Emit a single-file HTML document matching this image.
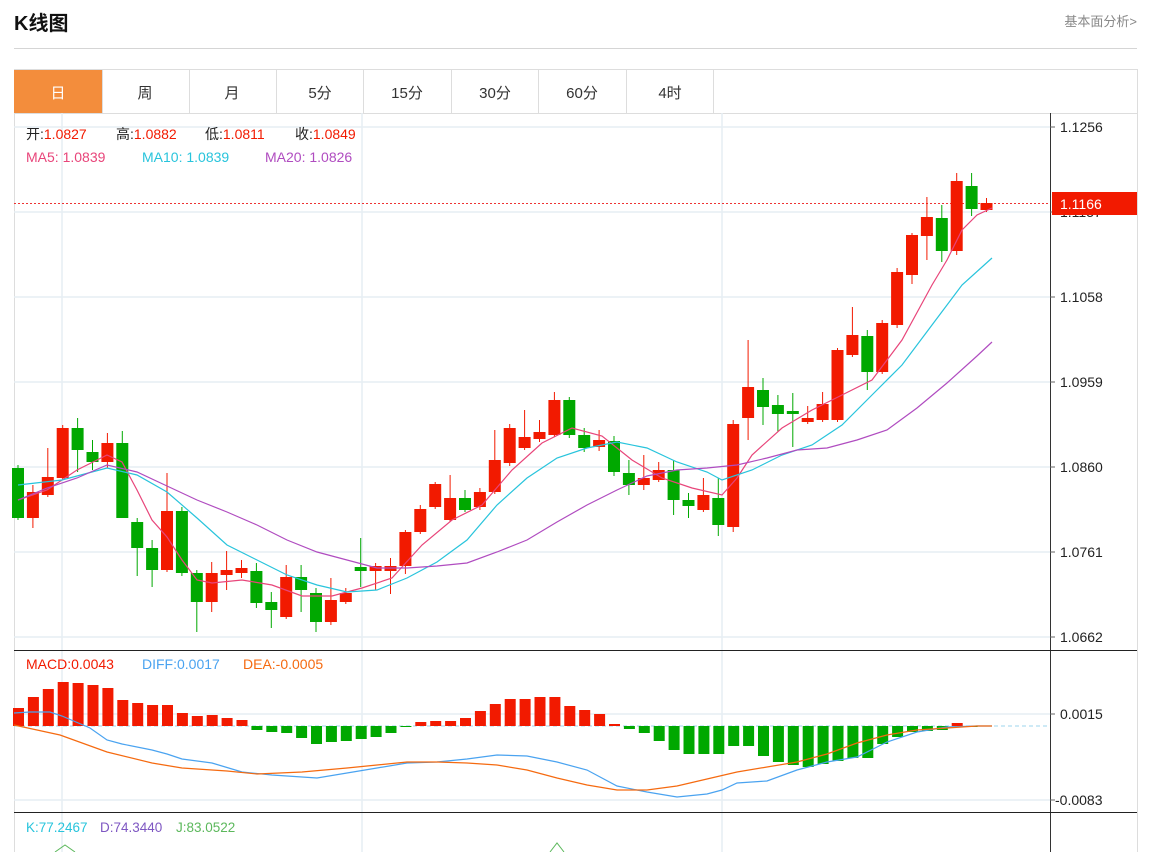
<!DOCTYPE html>
<html><head><meta charset="utf-8"><style>
body{margin:0;background:#fff;width:1152px;height:852px;overflow:hidden;font-family:"Liberation Sans","Noto Sans CJK SC",sans-serif}
</style></head><body>
<svg width="1152" height="852" xmlns="http://www.w3.org/2000/svg" font-family="Liberation Sans, Noto Sans CJK SC, sans-serif">
<text x="14" y="30" font-size="20" font-weight="bold" fill="#111">K线图</text>
<text x="1137" y="26" font-size="13" fill="#888" text-anchor="end">基本面分析&gt;</text>
<line x1="14" y1="48.5" x2="1137" y2="48.5" stroke="#d5d5d5"/>
<rect x="14.5" y="69.5" width="1123" height="800" fill="none" stroke="#ddd"/>
<rect x="14" y="70" width="88" height="43" fill="#f38d3c"/>
<g stroke="#ddd"><line x1="102.5" y1="70" x2="102.5" y2="113"/><line x1="189.5" y1="70" x2="189.5" y2="113"/><line x1="276.5" y1="70" x2="276.5" y2="113"/><line x1="363.5" y1="70" x2="363.5" y2="113"/><line x1="451.5" y1="70" x2="451.5" y2="113"/><line x1="538.5" y1="70" x2="538.5" y2="113"/><line x1="626.5" y1="70" x2="626.5" y2="113"/><line x1="713.5" y1="70" x2="713.5" y2="113"/><line x1="14" y1="113.5" x2="1137" y2="113.5"/></g>
<g font-size="15" text-anchor="middle" fill="#333"><text x="58" y="98" fill="#fff">日</text><text x="145" y="98">周</text><text x="232" y="98">月</text><text x="320" y="98">5分</text><text x="407" y="98">15分</text><text x="495" y="98">30分</text><text x="582" y="98">60分</text><text x="670" y="98">4时</text></g>
<g stroke="#e6eef4" stroke-width="1.5"><line x1="14" y1="127" x2="1050" y2="127"/><line x1="14" y1="212" x2="1050" y2="212"/><line x1="14" y1="297" x2="1050" y2="297"/><line x1="14" y1="382" x2="1050" y2="382"/><line x1="14" y1="467" x2="1050" y2="467"/><line x1="14" y1="552" x2="1050" y2="552"/><line x1="14" y1="637" x2="1050" y2="637"/><line x1="14" y1="714" x2="1050" y2="714"/><line x1="14" y1="800" x2="1050" y2="800"/><line x1="62" y1="113" x2="62" y2="852"/><line x1="362" y1="113" x2="362" y2="852"/><line x1="722" y1="113" x2="722" y2="852"/></g>
<line x1="1050.5" y1="113" x2="1050.5" y2="852" stroke="#333"/>
<line x1="14" y1="650.5" x2="1137" y2="650.5" stroke="#222"/>
<line x1="14" y1="812.5" x2="1137" y2="812.5" stroke="#222"/>
<g font-size="14" fill="#222"><text x="1060" y="132">1.1256</text><text x="1060" y="217">1.1157</text><text x="1060" y="302">1.1058</text><text x="1060" y="387">1.0959</text><text x="1060" y="472">1.0860</text><text x="1060" y="557">1.0761</text><text x="1060" y="642">1.0662</text><text x="1060" y="719">0.0015</text><text x="1055" y="805">-0.0083</text></g>
<g stroke="#666"><line x1="1050" y1="127" x2="1055" y2="127"/><line x1="1050" y1="212" x2="1055" y2="212"/><line x1="1050" y1="297" x2="1055" y2="297"/><line x1="1050" y1="382" x2="1055" y2="382"/><line x1="1050" y1="467" x2="1055" y2="467"/><line x1="1050" y1="552" x2="1055" y2="552"/><line x1="1050" y1="637" x2="1055" y2="637"/><line x1="1050" y1="714" x2="1055" y2="714"/><line x1="1050" y1="800" x2="1055" y2="800"/></g>
<line x1="14" y1="203.5" x2="1050" y2="203.5" stroke="#e33" stroke-dasharray="2,2"/>
<rect x="1052" y="192" width="85" height="23" fill="#f21a00"/>
<text x="1060" y="209" font-size="14" fill="#fff">1.1166</text>
<line x1="14" y1="726" x2="1050" y2="726" stroke="#9dd6ee" stroke-dasharray="4,3"/>
<g id="c"></g><g id="m"></g>
<polyline fill="none" stroke="#e8457a" stroke-width="1.2" points="18,500 47,490 77,470 107,455 122,462 137,490 152,520 167,537 182,560 197,580 212,583 242,580 272,585 302,596 332,596 362,588 392,578 422,545 452,520 482,505 512,470 542,443 572,428 602,436 632,460 662,478 692,488 722,495 737,478 752,455 782,428 812,410 842,395 872,380 902,340 932,285 947,260 962,230 977,215 992,208"/>
<polyline fill="none" stroke="#28c4dc" stroke-width="1.2" points="18,485 62,480 92,472 107,468 137,475 167,492 197,518 227,545 257,560 287,575 317,585 347,592 377,590 407,578 437,562 467,540 497,505 527,478 557,458 587,448 617,442 647,448 677,462 707,472 722,480 752,470 782,455 812,445 842,425 872,395 902,365 932,325 962,285 992,258"/>
<polyline fill="none" stroke="#b04cc0" stroke-width="1.2" points="18,500 47,488 77,478 107,465 137,472 167,486 197,500 227,512 257,525 287,540 317,552 347,560 377,568 407,568 437,566 467,563 497,552 527,540 557,522 587,505 617,490 647,476 677,470 707,468 737,465 767,458 797,450 827,448 857,440 887,430 917,408 947,383 977,356 992,342"/>
<polyline fill="none" stroke="#4aa3f0" stroke-width="1.2" points="14,713 30,712 50,712 62,716 90,728 107,740 122,744 152,750 167,754 182,759 212,763 242,772 272,775 317,778 347,773 377,768 407,763 437,762 467,759 497,755 527,756 557,762 587,770 617,786 647,792 677,797 707,794 722,790 737,783 767,781 797,770 827,762 857,757 887,742 917,732 947,727 977,726 992,726"/>
<polyline fill="none" stroke="#f56a10" stroke-width="1.2" points="14,725 60,735 107,752 152,763 182,768 227,771 257,774 302,772 347,768 377,765 407,762 437,762 467,763 497,765 527,770 557,778 587,785 617,790 647,790 677,786 707,779 737,772 767,767 797,762 827,754 857,743 887,735 917,730 947,728 977,726 992,726"/>
<g font-size="14">
<text x="26" y="139" fill="#222">开:<tspan fill="#f21a00">1.0827</tspan></text>
<text x="116" y="139" fill="#222">高:<tspan fill="#f21a00">1.0882</tspan></text>
<text x="205" y="139" fill="#222">低:<tspan fill="#f21a00">1.0811</tspan></text>
<text x="295" y="139" fill="#222">收:<tspan fill="#f21a00">1.0849</tspan></text>
<text x="26" y="162" fill="#e8457a">MA5: 1.0839</text>
<text x="142" y="162" fill="#28c4dc">MA10: 1.0839</text>
<text x="265" y="162" fill="#b04cc0">MA20: 1.0826</text>
<text x="26" y="669" fill="#f21a00">MACD:0.0043</text>
<text x="142" y="669" fill="#4aa3f0">DIFF:0.0017</text>
<text x="243" y="669" fill="#f56a10">DEA:-0.0005</text>
<text x="26" y="832" fill="#28c4dc" font-size="13.5">K:77.2467</text>
<text x="100" y="832" fill="#7e57c2" font-size="13.5">D:74.3440</text>
<text x="176" y="832" fill="#5cb85c" font-size="13.5">J:83.0522</text></g>
<polyline fill="none" stroke="#5cb85c" points="55,852 65,845 75,852"/>
<polyline fill="none" stroke="#5cb85c" points="550,852 557,843 564,852"/>
</svg>
<script>
var d=[["g",468,518,465,520],["r",492,518,485,528],["r",477,495,448,497],["r",428,478,425,480],["g",428,450,418,472],["g",452,462,440,470],["r",443,462,433,468],["g",443,518,431,518],["g",522,548,518,576],["g",548,570,540,587],["r",511,570,473,572],["g",511,573,507,576],["g",573,602,570,632],["r",573,602,562,612],["r",570,575,551,590],["r",568,573,560,578],["g",571,603,563,608],["g",602,610,592,628],["r",577,617,565,619],["g",577,590,565,612],["g",593,622,588,632],["r",600,622,578,625],["r",593,602,588,604],["g",567,571,538,587],["r",566,571,563,590],["r",566,571,558,594],["r",532,566,530,574],["r",509,532,505,534],["r",484,507,482,509],["r",498,520,475,522],["g",498,510,490,512],["r",492,507,488,510],["r",460,492,430,494],["r",428,463,424,466],["r",437,448,410,450],["r",432,439,420,442],["r",400,435,392,437],["g",400,435,397,438],["g",435,448,428,452],["r",440,447,430,451],["g",441,472,436,476],["g",473,485,460,495],["r",478,485,455,490],["r",470,480,462,482],["g",470,500,460,515],["g",500,506,493,518],["r",495,510,478,512],["g",498,525,478,536],["r",424,527,420,532],["r",387,418,340,440],["g",390,407,378,425],["g",405,414,395,432],["g",411,414,393,447],["r",418,422,406,424],["r",404,420,392,422],["r",350,420,348,422],["r",335,355,307,357],["g",336,372,330,390],["r",323,372,320,374],["r",272,325,268,328],["r",235,275,233,284],["r",217,236,197,260],["g",218,251,205,262],["r",181,251,173,255],["g",186,209,173,216],["r",203,210,198,212]];
var m=[708,697,689,682,683,685,688,700,703,705,705,713,716,715,718,720,730,732,733,738,744,742,741,739,737,733,727,722,721,721,718,711,704,699,699,697,697,706,710,714,724,729,733,741,750,754,754,754,746,746,756,762,765,767,764,761,758,758,744,737,732,731,730,723,726];
var s="",t="";
d.forEach(function(c,i){var x=18+i*14.9,col=c[0]=="r"?"#f21a00":"#00a800";
s+='<line x1="'+x+'" y1="'+c[3]+'" x2="'+x+'" y2="'+c[4]+'" stroke="'+col+'"/><rect x="'+(x-6)+'" y="'+c[1]+'" width="12" height="'+Math.max(2,c[2]-c[1])+'" fill="'+col+'"/>';
if(i<m.length){var v=m[i];var y=Math.min(v,726),h=Math.max(1,Math.abs(v-726));var cc=v<726?"#f21a00":"#00a800";t+='<rect x="'+(x-5)+'" y="'+y+'" width="11" height="'+h+'" fill="'+cc+'"/>';}});
document.getElementById("c").innerHTML=s;document.getElementById("m").innerHTML=t;
</script>
</body></html>
